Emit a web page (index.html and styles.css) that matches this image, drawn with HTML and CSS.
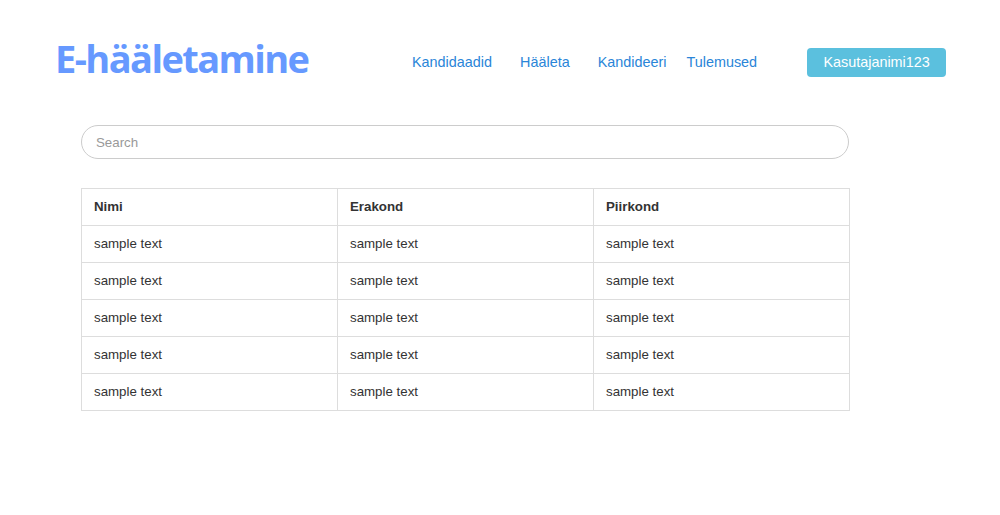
FILE: index.html
```html
<!DOCTYPE html>
<html lang="et">
<head>
<meta charset="utf-8">
<title>E-hääletamine</title>
<link rel="stylesheet" href="styles.css">
</head>
<body>
<header class="topbar">
  <h1 class="brand">E-hääletamine</h1>
  <nav class="nav">
    <a href="#">Kandidaadid</a>
    <a href="#">Hääleta</a>
    <a href="#">Kandideeri</a>
    <a href="#" class="last">Tulemused</a>
  </nav>
  <button class="user">Kasutajanimi123</button>
</header>
<main class="content">
  <input class="search" type="text" placeholder="Search">
  <table class="grid">
    <thead>
      <tr><th>Nimi</th><th>Erakond</th><th>Piirkond</th></tr>
    </thead>
    <tbody>
      <tr><td>sample text</td><td>sample text</td><td>sample text</td></tr>
      <tr><td>sample text</td><td>sample text</td><td>sample text</td></tr>
      <tr><td>sample text</td><td>sample text</td><td>sample text</td></tr>
      <tr><td>sample text</td><td>sample text</td><td>sample text</td></tr>
      <tr><td>sample text</td><td>sample text</td><td>sample text</td></tr>
    </tbody>
  </table>
</main>
</body>
</html>
```
FILE: styles.css
```css
html, body {
  margin: 0;
  padding: 0;
  background: #fff;
  font-family: "Liberation Sans", Arial, sans-serif;
  color: #333;
}

.topbar {
  display: flex;
  align-items: center;
  height: 124px;
  padding: 0 0 0 55px;
  box-sizing: border-box;
}

.brand {
  margin: 0;
  font-family: "Open Sans", sans-serif;
  font-weight: 700;
  font-size: 38px;
  letter-spacing: -1.6px;
  color: #6699ff;
  line-height: 1;
  width: 357px;
  position: relative;
  top: -4px;
}

.nav {
  display: flex;
  gap: 28px;
  font-size: 14.4px;
}

.nav a {
  color: #2a85d8;
  text-decoration: none;
}

.nav a.last {
  margin-left: -8px;
}

.user {
  margin-left: 50px;
  background: #5bc0de;
  color: #fff;
  border: none;
  border-radius: 4px;
  height: 29px;
  width: 139px;
  font-family: "Liberation Sans", Arial, sans-serif;
  font-size: 14.4px;
  padding: 0;
}

.content {
  padding: 1px 0 0 81px;
  width: 769px;
}

.search {
  display: block;
  width: 768px;
  height: 34px;
  box-sizing: border-box;
  border: 1px solid #ccc;
  border-radius: 17px;
  padding: 1px 14px 0;
  font-family: "Liberation Sans", Arial, sans-serif;
  font-size: 13.3px;
  color: #555;
  outline: none;
}

.search::placeholder {
  color: #999;
}

.grid {
  margin-top: 29px;
  width: 769px;
  border-collapse: collapse;
  table-layout: fixed;
  font-size: 13.3px;
}

.grid th, .grid td {
  border: 1px solid #ddd;
  height: 37px;
  padding: 0 12px 2px;
  text-align: left;
  vertical-align: middle;
  box-sizing: border-box;
}

.grid th {
  font-weight: 700;
}
```
